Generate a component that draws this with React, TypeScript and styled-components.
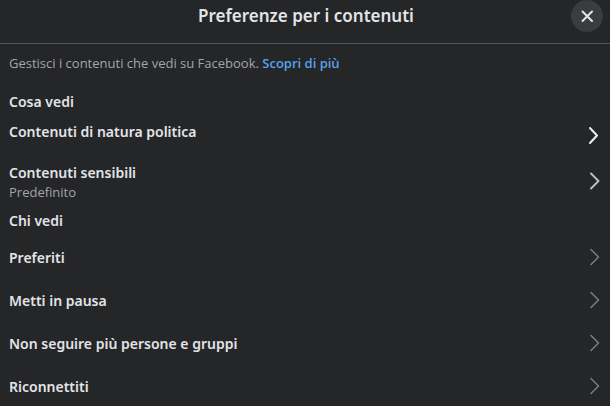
import React from 'react';
import styled, { createGlobalStyle } from 'styled-components';

const GlobalStyle = createGlobalStyle`
  * { box-sizing: border-box; }
  body {
    margin: 0;
    background: #252628;
    color: #e2e4e8;
    font-family: "Noto Sans", "Open Sans", sans-serif;
  }
`;

const Dialog = styled.main`
  min-height: 100vh;
  background: #252628;
`;

const Header = styled.header`
  display: grid;
  grid-template-columns: 32px 1fr 32px;
  align-items: center;
  padding: 0 7px 11px 9px;
  border-bottom: 1px solid #56575a;
`;

const Title = styled.h1`
  grid-column: 2;
  margin: 0;
  text-align: center;
  font-size: 17px;
  line-height: 32px;
  font-weight: 600;
`;

const CloseButton = styled.button`
  display: flex;
  align-items: center;
  justify-content: center;
  width: 32px;
  height: 32px;
  padding: 0;
  border: 0;
  border-radius: 50%;
  background: #3b3c3e;
  color: #e4e6ea;
  cursor: pointer;
`;

const Content = styled.div`
  padding: 9px 9px 0;
`;

const Intro = styled.p`
  margin: 0 0 19px;
  font-family: "Open Sans", "Noto Sans", sans-serif;
  font-size: 13px;
  line-height: 20px;
  color: #a3a5a9;
`;

const MoreLink = styled.a`
  color: #5aa0ea;
  font-weight: 600;
  text-decoration: none;
`;

const Section = styled.section<{ $gap: number }>`
  display: flex;
  flex-direction: column;
  gap: ${({ $gap }) => $gap}px;
  margin-bottom: 10px;
`;

const SectionTitle = styled.h2`
  margin: 0;
  font-size: 14px;
  line-height: 20px;
  font-weight: 600;
`;

const List = styled.ul<{ $gap: number }>`
  display: flex;
  flex-direction: column;
  gap: ${({ $gap }) => $gap}px;
  margin: 0;
  padding: 0;
  list-style: none;
`;

const Row = styled.button<{ $raised?: boolean }>`
  display: flex;
  align-items: center;
  justify-content: space-between;
  width: 100%;
  min-height: ${({ $raised }) => ($raised ? 43 : 32)}px;
  padding: 0;
  border: 0;
  background: none;
  color: inherit;
  font: inherit;
  text-align: left;
  cursor: pointer;
`;

const RowText = styled.span<{ $raised?: boolean }>`
  display: flex;
  flex-direction: column;
  padding-top: 2px;
  padding-bottom: ${({ $raised }) => ($raised ? 8 : 0)}px;
`;

const RowLabel = styled.span`
  font-size: 14px;
  line-height: 20px;
  font-weight: 600;
`;

const RowDetail = styled.span`
  font-family: "Open Sans", "Noto Sans", sans-serif;
  font-size: 13px;
  line-height: 18px;
  color: #a3a5a9;
`;

const Arrow = styled.svg<{ $color: string }>`
  flex: none;
  width: 12px;
  height: 20px;
  fill: none;
  stroke: ${({ $color }) => $color};
  stroke-linecap: round;
  stroke-linejoin: round;
`;

interface Item {
  label: string;
  detail?: string;
  raised?: boolean;
  arrow: string;
  weight: number;
}

const whatYouSee: Item[] = [
  { label: 'Contenuti di natura politica', raised: true, arrow: '#eeeeef', weight: 2 },
  { label: 'Contenuti sensibili', detail: 'Predefinito', arrow: '#bcbdbf', weight: 2 },
];

const whoYouSee: Item[] = [
  'Preferiti',
  'Metti in pausa',
  'Non seguire più persone e gruppi',
  'Riconnettiti',
].map((label) => ({ label, arrow: '#7c7d7f', weight: 1.5 }));

function Items({ items, gap }: { items: Item[]; gap: number }) {
  return (
    <List $gap={gap}>
      {items.map((item) => (
        <li key={item.label}>
          <Row type="button" $raised={item.raised}>
            <RowText $raised={item.raised}>
              <RowLabel>{item.label}</RowLabel>
              {item.detail && <RowDetail>{item.detail}</RowDetail>}
            </RowText>
            <Arrow viewBox="0 0 12 20" $color={item.arrow} strokeWidth={item.weight} aria-hidden="true">
              <path d={item.raised ? 'M1 3 L8 10.5 L1 18' : 'M2 2.5 L9.5 10 L2 17.5'} />
            </Arrow>
          </Row>
        </li>
      ))}
    </List>
  );
}

export default function App() {
  return (
    <>
      <GlobalStyle />
      <Dialog>
        <Header>
          <Title>Preferenze per i contenuti</Title>
          <CloseButton type="button" aria-label="Chiudi">
            <svg width="16" height="16" viewBox="0 0 16 16" fill="none" stroke="currentColor" strokeWidth="2" strokeLinecap="round" aria-hidden="true">
              <path d="M3.5 3.5 L13 13 M13 3.5 L3.5 13" />
            </svg>
          </CloseButton>
        </Header>
        <Content>
          <Intro>
            Gestisci i contenuti che vedi su Facebook. <MoreLink href="#">Scopri di più</MoreLink>
          </Intro>
          <Section $gap={1}>
            <SectionTitle>Cosa vedi</SectionTitle>
            <Items items={whatYouSee} gap={5} />
          </Section>
          <Section $gap={10}>
            <SectionTitle>Chi vedi</SectionTitle>
            <Items items={whoYouSee} gap={11} />
          </Section>
        </Content>
      </Dialog>
    </>
  );
}
